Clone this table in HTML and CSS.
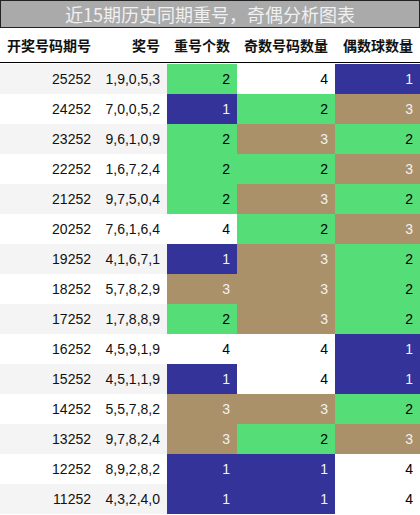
FILE: index.html
```html
<!DOCTYPE html>
<html lang="zh-CN">
<head>
    <meta charset="UTF-8">
    <title>近15期历史同期重号，奇偶分析图表</title>
    <link rel="stylesheet" href="styles.css">
</head>
<body>
    <div class="chart-title">近15期历史同期重号，奇偶分析图表</div>
    <table class="stats-table">
        <colgroup>
            <col class="col-issue">
            <col class="col-balls">
            <col class="col-repeat">
            <col class="col-odd">
            <col class="col-even">
        </colgroup>
        <thead>
            <tr>
                <th>开奖号码期号</th>
                <th>奖号</th>
                <th>重号个数</th>
                <th>奇数号码数量</th>
                <th>偶数球数量</th>
            </tr>
        </thead>
        <tbody>
            <tr><td>25252</td><td>1,9,0,5,3</td><td class="v2">2</td><td class="v4">4</td><td class="v1">1</td></tr>
            <tr><td>24252</td><td>7,0,0,5,2</td><td class="v1">1</td><td class="v2">2</td><td class="v3">3</td></tr>
            <tr><td>23252</td><td>9,6,1,0,9</td><td class="v2">2</td><td class="v3">3</td><td class="v2">2</td></tr>
            <tr><td>22252</td><td>1,6,7,2,4</td><td class="v2">2</td><td class="v2">2</td><td class="v3">3</td></tr>
            <tr><td>21252</td><td>9,7,5,0,4</td><td class="v2">2</td><td class="v3">3</td><td class="v2">2</td></tr>
            <tr><td>20252</td><td>7,6,1,6,4</td><td class="v4">4</td><td class="v2">2</td><td class="v3">3</td></tr>
            <tr><td>19252</td><td>4,1,6,7,1</td><td class="v1">1</td><td class="v3">3</td><td class="v2">2</td></tr>
            <tr><td>18252</td><td>5,7,8,2,9</td><td class="v3">3</td><td class="v3">3</td><td class="v2">2</td></tr>
            <tr><td>17252</td><td>1,7,8,8,9</td><td class="v2">2</td><td class="v3">3</td><td class="v2">2</td></tr>
            <tr><td>16252</td><td>4,5,9,1,9</td><td class="v4">4</td><td class="v4">4</td><td class="v1">1</td></tr>
            <tr><td>15252</td><td>4,5,1,1,9</td><td class="v1">1</td><td class="v4">4</td><td class="v1">1</td></tr>
            <tr><td>14252</td><td>5,5,7,8,2</td><td class="v3">3</td><td class="v3">3</td><td class="v2">2</td></tr>
            <tr><td>13252</td><td>9,7,8,2,4</td><td class="v3">3</td><td class="v2">2</td><td class="v3">3</td></tr>
            <tr><td>12252</td><td>8,9,2,8,2</td><td class="v1">1</td><td class="v1">1</td><td class="v4">4</td></tr>
            <tr><td>11252</td><td>4,3,2,4,0</td><td class="v1">1</td><td class="v1">1</td><td class="v4">4</td></tr>
        </tbody>
    </table>
</body>
</html>
```

FILE: styles.css
```css
body {
    margin: 0;
    background: #ffffff;
    font-family: "Liberation Sans", Arial, "Noto Sans CJK SC", sans-serif;
}

/* Title bar */
.chart-title {
    height: 26px;
    line-height: 26px;
    border: 1px solid #222;
    background-color: #aaaaaa;
    color: #f0f0f0;
    font-family: "Noto Sans CJK SC", sans-serif;
    font-size: 18px;
    text-align: center;
}

/* Table */
.stats-table {
    width: 420px;
    border-collapse: collapse;
    table-layout: fixed;
    font-size: 14px;
    color: #111;
}

.col-issue { width: 98px; }
.col-balls { width: 69px; }
.col-repeat { width: 70px; }
.col-odd { width: 98px; }
.col-even { width: 85px; }

/* Header: black rule with a 1px white gap under it */
.stats-table th {
    height: 34px;
    padding: 0 7px 2px 0;
    background: linear-gradient(to top, #fff 1px, #000 1px, #000 2px, transparent 2px);
    font-family: "Noto Sans CJK SC", sans-serif;
    font-size: 14px;
    font-weight: bold;
    text-align: right;
    white-space: nowrap;
}

.stats-table td {
    height: 30px;
    padding: 0 7px 0 0;
    text-align: right;
    white-space: nowrap;
}

.stats-table tbody tr:nth-child(odd) {
    background-color: #f4f4f4;
}

/* Value colours */
.stats-table td.v1 {
    background-color: #333399;
    color: #f1f1f1;
}

.stats-table td.v2 {
    background-color: #55dd77;
    color: #000;
}

.stats-table td.v3 {
    background-color: #aa916a;
    color: #f1f1f1;
}

.stats-table td.v4 {
    background-color: #ffffff;
    color: #000;
}
```
